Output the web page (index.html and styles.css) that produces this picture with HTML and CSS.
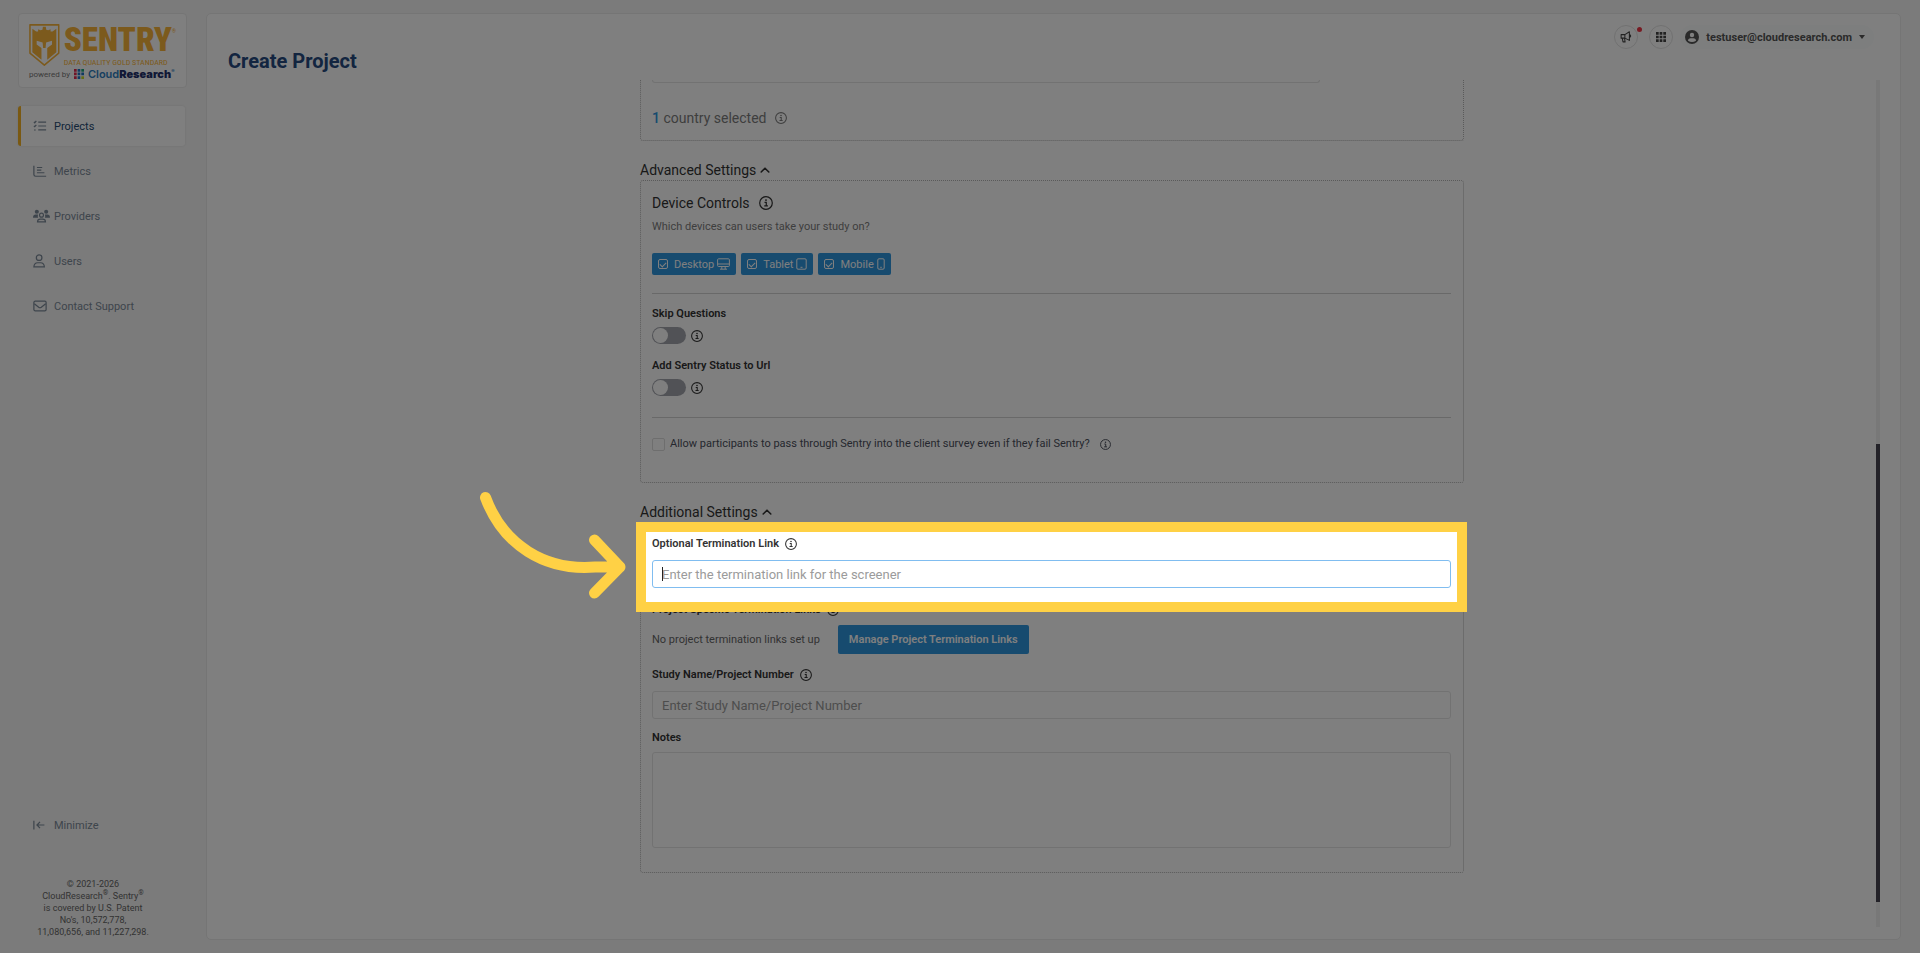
FILE: index.html
```html
<!DOCTYPE html>
<html lang="en">
<head>
  <meta charset="UTF-8">
  <meta name="viewport" content="width=device-width, initial-scale=1.0">
  <title>Create Project</title>
  <link rel="stylesheet" href="styles.css">
</head>
<body>
  <svg class="defs" width="0" height="0" aria-hidden="true">
    <symbol id="info" viewBox="0 0 16 16">
      <circle cx="8" cy="8" r="7.2" fill="none" stroke="currentColor" stroke-width="1.4"/>
      <circle cx="8" cy="4.7" r="1.1" fill="currentColor"/>
      <path d="M6.3 7.3h2v4M6 11.4h4.2" fill="none" stroke="currentColor" stroke-width="1.4"/>
    </symbol>
    <symbol id="chevron" viewBox="0 0 10 10">
      <path d="M1.2 7 5 3.2 8.8 7" fill="none" stroke="currentColor" stroke-width="1.6" stroke-linecap="round" stroke-linejoin="round"/>
    </symbol>
  </svg>

  <aside class="sidebar">
    <a class="logo" href="#" aria-label="Sentry home">
      <div class="logo-top">
        <svg class="shield" viewBox="0 0 32 44">
          <path d="M1 1h30v29.500L16 43 1 30.500z" fill="none" stroke="#f9b53a" stroke-width="1.600" stroke-linejoin="round"/>
          <path d="M3.500 5L7.500 8H9.500V5.500L12 6.500 14 6 14.500 3H17.500L18 6 20 6.500 22.500 5.500V8H24.500L28.500 5V29.500L19 37.500V25L24 21.500V17.500L17.800 19.500 17.300 25H14.700L14.200 19.500 8 17.500V21.500L13 25V37.500L3.500 29.500z" fill="#f9b53a"/>
        </svg>
        <div class="logo-words">
          <span class="logo-name">SENTRY<sup>®</sup></span>
          <span class="logo-tag">DATA QUALITY GOLD STANDARD</span>
        </div>
      </div>
      <div class="logo-bottom">
        <span class="powered">powered by</span>
        <svg class="dots" viewBox="0 0 10 10">
          <path fill="#e0284f" d="M0 0h2.700v2.700H0zM0 3.600h2.700v2.700H0zM0 7.300h2.700V10H0z"/>
          <path fill="#1f74c4" d="M3.600 0h2.700v2.700H3.600zM3.600 3.600h2.700v2.700H3.600zM3.600 7.300h2.700V10H3.600zM7.300 3.600H10v2.700H7.300z"/>
          <path fill="#18a57d" d="M7.300 0H10v2.700H7.300z"/>
          <path fill="#c9d92b" d="M7.300 7.300H10V10H7.300z"/>
        </svg>
        <span class="brand">Cloud<b>Research</b><sup>®</sup></span>
      </div>
    </a>

    <nav class="nav">
      <a class="nav-item active" href="#">
        <svg viewBox="0 0 16 14"><path d="M1 2.300l1 1 1.800-2.200M1 6.800l1 1 1.800-2.200M6 2.500h9M6 7h9M6 11.500h9" /><circle class="solid" cx="2.200" cy="11.500" r=".9"/></svg>
        Projects
      </a>
      <a class="nav-item" href="#">
        <svg viewBox="0 0 16 14"><path d="M1 1v10q0 2 2 2h12M4.500 3h6M4.500 6h5M4.500 9h8.500"/></svg>
        Metrics
      </a>
      <a class="nav-item" href="#">
        <svg class="wide" viewBox="0 0 20 16"><g class="solid"><circle cx="4.500" cy="3" r="2.400"/><circle cx="15.500" cy="3" r="2.400"/><path d="M0 10q0-3.700 3.300-3.700h2.700q-.8 2 0 3.700zM20 10q0-3.700-3.300-3.700h-2.700q.8 2 0 3.700z"/></g><circle cx="10" cy="7" r="2.300"/><path d="M5.300 15q0-3.300 3.300-3.300h2.800q3.300 0 3.300 3.300z"/></svg>
        Providers
      </a>
      <a class="nav-item" href="#">
        <svg viewBox="0 0 16 16"><circle cx="7" cy="4.200" r="3.200"/><path d="M1 14.800q.3-4.800 4.300-4.800h3.400q4 0 4.300 4.800z"/></svg>
        Users
      </a>
      <a class="nav-item" href="#">
        <svg viewBox="0 0 16 14"><rect x="1" y="1.500" width="14" height="11" rx="1.500"/><path d="M1.500 4.500L6.500 8.500q1.500 1 3 0L14.500 4.500"/></svg>
        Contact Support
      </a>
    </nav>

    <button class="nav-item minimize" type="button">
      <svg viewBox="0 0 16 14"><path d="M1 2v10M4.500 7H13M8 3.500L4.500 7 8 10.500"/></svg>
      Minimize
    </button>
    <p class="legal">© 2021-2026<br>CloudResearch<sup>®</sup>. Sentry<sup>®</sup><br>is covered by U.S. Patent<br>No's, 10,572,778,<br>11,080,656, and 11,227,298.</p>
  </aside>

  <main class="panel">
    <header class="header">
      <h1>Create Project</h1>
      <div class="account">
        <button class="round news" type="button" aria-label="Announcements">
          <svg viewBox="0 0 16 16" width="12" height="12"><path d="M1.500 4.800h5L12.500 1v11.500L6.500 9.500h-5zM3 9.500l1 5h2.800l-.8-5M6.500 4.800v4.700M13 5q2.500 1.700 0 3.500" fill="none" stroke="currentColor" stroke-width="1.400" stroke-linejoin="round"/></svg>
          <span class="badge"></span>
        </button>
        <button class="round" type="button" aria-label="Apps">
          <svg viewBox="0 0 10 10" width="10" height="10"><path d="M0 0h2.700v2.700H0zM3.650 0h2.700v2.700H3.650zM7.300 0H10v2.700H7.300zM0 3.650h2.700v2.700H0zM3.650 3.650h2.700v2.700H3.650zM7.300 3.650H10v2.700H7.300zM0 7.300h2.700V10H0zM3.650 7.300h2.700V10H3.650zM7.300 7.300H10V10H7.300z" fill="currentColor"/></svg>
        </button>
        <button class="user" type="button">
          <svg viewBox="0 0 14 14" width="14" height="14"><circle cx="7" cy="7" r="7" fill="currentColor"/><circle cx="7" cy="5" r="2.200" fill="#fff"/><path d="M3 10.800q0-2.600 2.600-2.600h2.800q2.600 0 2.600 2.600-4 2.400-8 0z" fill="#fff"/></svg>
          testuser@cloudresearch.com
          <svg viewBox="0 0 6 4" width="6" height="4"><path d="M0 0h6L3 4z" fill="currentColor"/></svg>
        </button>
      </div>
    </header>

    <div class="content">
      <form class="form">
        <section class="card card-cut">
          <div class="country-list"></div>
          <p class="country"><span><b>1</b> country selected</span><svg class="info"><use href="#info"/></svg></p>
        </section>

        <button class="section-toggle" type="button">Advanced Settings <svg><use href="#chevron"/></svg></button>
        <section class="card">
          <h2 class="title">Device Controls <svg class="info info-lg"><use href="#info"/></svg></h2>
          <p class="hint">Which devices can users take your study on?</p>
          <div class="chips">
            <label class="chip"><input type="checkbox" checked>Desktop
              <svg width="13" height="12" viewBox="0 0 13 12"><rect x=".6" y=".8" width="11.800" height="7.700" rx="1"/><path d="M.6 6h11.800M4.800 8.500v2.500M8.200 8.500v2.500M3 11.200h7"/></svg>
            </label>
            <label class="chip"><input type="checkbox" checked>Tablet
              <svg width="11" height="12" viewBox="0 0 11 12"><rect x=".8" y=".8" width="9.400" height="10.400" rx="1.200"/><path d="M4.500 9.300h2"/></svg>
            </label>
            <label class="chip"><input type="checkbox" checked>Mobile
              <svg width="8" height="12" viewBox="0 0 8 12"><rect x=".8" y=".8" width="6.400" height="10.400" rx="1.200"/><path d="M3.200 9.300h1.600"/></svg>
            </label>
          </div>
          <hr>
          <label class="label" for="skip">Skip Questions</label>
          <div class="switch-row">
            <input class="switch" type="checkbox" id="skip">
            <svg class="info"><use href="#info"/></svg>
          </div>
          <label class="label second" for="status">Add Sentry Status to Url</label>
          <div class="switch-row">
            <input class="switch" type="checkbox" id="status">
            <svg class="info"><use href="#info"/></svg>
          </div>
          <hr>
          <div class="check-row">
            <input class="check" type="checkbox" id="pass">
            <label for="pass">Allow participants to pass through Sentry into the client survey even if they fail Sentry?</label>
            <svg class="info info-sm"><use href="#info"/></svg>
          </div>
        </section>

        <button class="section-toggle" type="button">Additional Settings <svg><use href="#chevron"/></svg></button>
        <section class="card card-last">
          <div class="field tour-target">
            <label class="label" for="term">Optional Termination Link <svg class="info"><use href="#info"/></svg></label>
            <input class="input focused" type="text" id="term" placeholder="Enter the termination link for the screener">
            <span class="caret"></span>
            <!-- tour step: the frame's shadow darkens the rest of the page -->
            <div class="spotlight"></div>
            <svg class="arrow" width="150" height="112" viewBox="0 0 150 112"><path d="M8.500 8.500C26 56 68 82 118 78H143M117.500 51L143 78 117.500 104"/></svg>
          </div>
          <div class="field links">
            <div class="label">Project Specific Termination Links <svg class="info"><use href="#info"/></svg></div>
            <div class="links-row">
              <span>No project termination links set up</span>
              <button class="btn" type="button">Manage Project Termination Links</button>
            </div>
          </div>
          <div class="field">
            <label class="label" for="study">Study Name/Project Number <svg class="info"><use href="#info"/></svg></label>
            <input class="input" type="text" id="study" placeholder="Enter Study Name/Project Number">
          </div>
          <div class="field notes">
            <label class="label" for="notes">Notes</label>
            <textarea class="input" id="notes"></textarea>
          </div>
        </section>
      </form>
      <div class="scrollbar"><div class="thumb"></div></div>
    </div>
  </main>
</body>
</html>
```

FILE: styles.css
```css
* {
  box-sizing: border-box;
}
body {
  margin: 0;
  height: 100vh;
  padding: 13px 19px 13px 0;
  display: flex;
  overflow: hidden;
  background: #f6f6f6;
  color: #333;
  font-family: Roboto, "Liberation Sans", sans-serif;
  font-size: 11px;
}
button, input, textarea {
  font-family: inherit;
}
button {
  cursor: pointer;
}
h1, h2, p {
  margin: 0;
}
.defs {
  position: absolute;
}

/* sidebar */
.sidebar {
  flex: none;
  width: 206px;
  padding-left: 18px;
  display: flex;
  flex-direction: column;
}
.logo {
  width: 169px;
  height: 75px;
  padding: 8px 10px;
  background: #fff;
  border: 1px solid #eaeaea;
  border-radius: 4px;
  text-decoration: none;
}
.logo-top {
  display: flex;
  gap: 4px;
}
.shield {
  width: 32px;
  height: 46px;
}
.logo-words {
  display: flex;
  flex-direction: column;
  color: #f9b53a;
}
.logo-name {
  font-family: "Roboto Condensed", Roboto, sans-serif;
  font-size: 33px;
  line-height: 36px;
  font-weight: 900;
  white-space: nowrap;
}
.logo-name sup {
  font-size: 5px;
  line-height: 5px;
  vertical-align: 18px;
}
.logo-tag {
  font-family: "Roboto Condensed", Roboto, sans-serif;
  font-size: 8px;
  line-height: 10px;
  white-space: nowrap;
}
.logo-bottom {
  display: flex;
  align-items: center;
  gap: 4px;
  height: 12px;
}
.powered {
  font-size: 8px;
  color: #777;
}
.dots {
  width: 10px;
  height: 10px;
}
.brand {
  font-family: Inter, sans-serif;
  font-size: 11px;
  font-weight: 600;
  color: #2f7fc1;
  white-space: nowrap;
}
.brand b {
  color: #23306b;
}
.brand sup {
  font-size: 5px;
  line-height: 5px;
}
.nav {
  margin-top: 18px;
  display: flex;
  flex-direction: column;
  gap: 5px;
}
.nav-item {
  display: flex;
  align-items: center;
  gap: 7px;
  width: 167px;
  height: 40px;
  padding: 0 12px;
  border: 0;
  border-left: 3px solid transparent;
  border-radius: 3px;
  background: none;
  color: #7c8a99;
  font-size: 11px;
  text-decoration: none;
}
.nav-item svg {
  width: 14px;
  height: 14px;
  fill: none;
  stroke: currentColor;
  stroke-width: 1.4;
  overflow: visible;
}
.nav-item svg.wide {
  width: 17px;
  margin-right: -3px;
}
.nav-item .solid {
  fill: currentColor;
  stroke: none;
}
.active {
  background: #fff;
  border-left-color: #f5b324;
  color: #264a73;
  box-shadow: 0 0 2px #ddd;
}
.active svg {
  color: #7c8a99;
}
.minimize {
  margin-top: auto;
}
.legal {
  width: 150px;
  margin-top: 33px;
  margin-bottom: 2px;
  font-size: 9px;
  line-height: 12px;
  text-align: center;
  color: #666;
}
.legal sup {
  font-size: 7px;
  line-height: 7px;
}

/* main panel */
.panel {
  flex: 1;
  display: flex;
  flex-direction: column;
  padding: 0 20px 12px 21px;
  background: #fff;
  border: 1px solid #eaeaea;
  border-radius: 5px;
}
.header {
  height: 66px;
  padding-top: 11px;
  display: flex;
  justify-content: space-between;
  align-items: flex-start;
}
h1 {
  margin-top: 24px;
  font-size: 20px;
  line-height: 24px;
  color: #264a80;
}
.account {
  display: flex;
  gap: 7px;
  margin-right: 6px;
}
.round {
  position: relative;
  width: 24px;
  height: 24px;
  padding: 0;
  display: flex;
  align-items: center;
  justify-content: center;
  border: 1px solid #e2e2e2;
  border-radius: 50%;
  background: none;
  color: #444;
}
.news {
  margin-right: 4px;
}
.badge {
  position: absolute;
  top: 1px;
  right: -5px;
  width: 5px;
  height: 5px;
  border-radius: 50%;
  background: #ee3545;
}
.user {
  display: flex;
  align-items: center;
  gap: 7px;
  height: 24px;
  padding: 0 9px 0 5px;
  border: 0;
  border-radius: 12px;
  background: #fafcfc;
  color: #555;
  font-size: 11px;
  font-weight: 700;
}
.content {
  flex: 1;
  display: flex;
}
.form {
  width: calc(50% - 2px);
  margin: 0 auto;
}
.scrollbar {
  width: 4px;
  background: #f0f0f0;
}
.thumb {
  position: relative;
  top: 43%;
  height: 54%;
  background: #474550;
}

/* form */
.card {
  padding: 12px 12px 30px 11px;
  border: 1px dotted #b4b4b4;
  border-radius: 3px;
}
.card-cut {
  padding-top: 0;
  padding-bottom: 12px;
  border-top: 0;
  border-radius: 0 0 3px 3px;
}
.card-last {
  padding-bottom: 24px;
}
.country-list {
  width: 668px;
  max-width: 100%;
  height: 3px;
  border: 1px solid #e4e4e4;
  border-top: 0;
  border-radius: 0 0 3px 3px;
}
.country {
  display: flex;
  align-items: center;
  gap: 9px;
  margin-top: 25px;
  font-size: 14px;
  line-height: 20px;
  color: #7d7d7d;
}
.country b {
  color: #2e96de;
  font-weight: 500;
}
.info {
  flex: none;
  width: 12px;
  height: 12px;
}
.info-lg {
  width: 14px;
  height: 14px;
}
.info-sm {
  width: 11px;
  height: 11px;
}
.section-toggle {
  display: flex;
  align-items: center;
  gap: 4px;
  height: 20px;
  margin-top: 19px;
  padding: 0;
  border: 0;
  background: none;
  color: #333;
  font-size: 14px;
}
.section-toggle svg {
  width: 10px;
  height: 10px;
}
.title {
  display: flex;
  align-items: center;
  gap: 9px;
  font-size: 14px;
  line-height: 20px;
  font-weight: 400;
}
.hint {
  margin-top: 6px;
  line-height: 16px;
  color: #7d7d7d;
}
.chips {
  display: flex;
  gap: 5px;
  margin-top: 18px;
}
.chip {
  display: flex;
  align-items: center;
  gap: 3px;
  height: 22px;
  padding: 0 6px;
  border-radius: 2px;
  background: #2e96de;
  color: #fff;
  font-size: 11px;
}
.chip input {
  appearance: none;
  width: 10px;
  height: 10px;
  margin: 0 3px 0 0;
  border: 1px solid #fff;
  border-radius: 2px;
}
.chip input:checked::before {
  content: "";
  display: block;
  width: 5px;
  height: 3px;
  margin: 2px 0 0 1px;
  border-left: 1px solid #fff;
  border-bottom: 1px solid #fff;
  transform: rotate(-45deg);
}
.chip svg {
  fill: none;
  stroke: #fff;
}
hr {
  height: 1px;
  margin: 18px 0 0;
  border: 0;
  background: #d2d2d2;
}
.label {
  display: flex;
  align-items: center;
  gap: 6px;
  line-height: 18px;
  font-weight: 600;
}
hr + .label {
  margin-top: 11px;
}
.second {
  margin-top: 13px;
}
.switch-row {
  display: flex;
  align-items: center;
  gap: 5px;
  height: 17px;
  margin-top: 4px;
}
.switch {
  appearance: none;
  width: 34px;
  height: 17px;
  margin: 0;
  padding: 1px;
  border-radius: 9px;
  background: #a3a5ad;
}
.switch::before {
  content: "";
  display: block;
  width: 15px;
  height: 15px;
  border-radius: 50%;
  background: #fff;
}
.switch:checked {
  background: #2e96de;
}
.switch:checked::before {
  margin-left: auto;
}
.switch-row + hr {
  margin-top: 21px;
}
.check-row {
  display: flex;
  align-items: center;
  gap: 5px;
  margin-top: 18px;
  line-height: 16px;
  color: #4b4f5c;
}
.check-row .info {
  margin-left: 5px;
}
.check {
  appearance: none;
  width: 13px;
  height: 13px;
  margin: 0;
  border: 1px solid #dcdcdc;
  border-radius: 2px;
}
.field + .field {
  margin-top: 12px;
}
.field + .links {
  margin-top: 13px;
}
.field + .notes {
  margin-top: 10px;
}
.input {
  display: block;
  width: 100%;
  height: 28px;
  margin-top: 7px;
  padding: 0 9px;
  border: 1px solid #e4e4e4;
  border-radius: 3px;
  background: #fff;
  color: #333;
  font-size: 13px;
}
.input::placeholder {
  color: #9b9b9b;
}
.focused {
  border-color: #80bdf0;
}
textarea.input {
  height: 96px;
  margin-top: 5px;
  resize: none;
}
.links-row {
  display: flex;
  align-items: center;
  gap: 18px;
  margin-top: 6px;
  color: #666;
}
.btn {
  height: 29px;
  padding: 0 11px;
  border: 0;
  border-radius: 2px;
  background: #2e96de;
  color: #fff;
  font-size: 11px;
  font-weight: 600;
}

/* guided tour */
.tour-target {
  position: relative;
}
.caret {
  position: absolute;
  left: 10px;
  bottom: 7px;
  width: 1px;
  height: 14px;
  background: #222;
}
.spotlight {
  position: absolute;
  z-index: 10;
  top: -13px;
  bottom: -24px;
  left: -16px;
  right: -16px;
  border: 10px solid #ffd145;
  box-shadow: 0 0 0 200vmax rgba(0, 0, 0, 0.5);
  pointer-events: none;
}
.arrow {
  position: absolute;
  z-index: 11;
  top: -46px;
  left: -175px;
  fill: none;
  stroke: #ffd145;
  stroke-width: 11;
  stroke-linecap: round;
  stroke-linejoin: round;
  pointer-events: none;
}
```
